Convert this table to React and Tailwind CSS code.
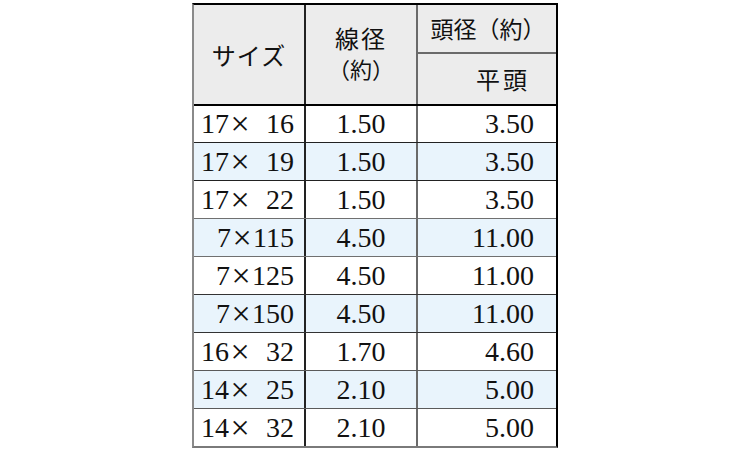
import React from "react";

const rows = [
  { a: "17", b: "16", d: "1.50", h: "3.50", line: "border-t-[#222]" },
  { a: "17", b: "19", d: "1.50", h: "3.50", line: "border-t-[#222]" },
  { a: "17", b: "22", d: "1.50", h: "3.50", line: "border-t-[#222]" },
  { a: "7", b: "115", d: "4.50", h: "11.00", line: "border-t-[#707070]" },
  { a: "7", b: "125", d: "4.50", h: "11.00", line: "border-t-[#707070]" },
  { a: "7", b: "150", d: "4.50", h: "11.00", line: "border-t-[#333]" },
  { a: "16", b: "32", d: "1.70", h: "4.60", line: "border-t-[#333]" },
  { a: "14", b: "25", d: "2.10", h: "5.00", line: "border-t-[#5a5a5a]" },
  { a: "14", b: "32", d: "2.10", h: "5.00", line: "border-t-[#5a5a5a]" },
];

const font = { fontFamily: '"Liberation Serif", "Noto Sans CJK JP", serif' };

function Size({ a, b }) {
  return (
    <span className="flex items-center justify-end">
      <span className="inline-block">{a.length === 1 ? <span className="inline-block w-[14px]" /> : null}{a}</span>
      <span className="inline-block w-[22px] text-center text-[34px] leading-none">×</span>
      {b.length === 2 ? <span className="inline-block w-[15px]" /> : null}
      <span>{b}</span>
    </span>
  );
}

export default function App() {
  return (
    <div className="w-[750px] h-[450px] bg-white" style={font}>
      <div className="mx-auto mt-[3px] w-[366px] border-t-2 border-t-black border-l-2 border-l-[#8a8a8a] border-r-2 border-r-black border-b-2 border-b-[#7a7a7a] text-[#111]">
        {/* header */}
        <div className="flex h-[101px] bg-[#ececec] border-b-2 border-b-black">
          <div className="w-[112px] border-r-2 border-r-[#222] flex items-center justify-center">
            <span className="text-[24px] tracking-[1px] leading-none" style={{ fontFamily: '"Noto Sans CJK JP", serif' }}>サイズ</span>
          </div>
          <div className="w-[112px] border-r-2 border-r-[#6a6a6a] flex flex-col items-center justify-center pb-[4px]">
            <span className="text-[24px] leading-[30px] tracking-[2px]" style={{ fontFamily: '"Noto Sans CJK JP", serif' }}>線径</span>
            <span className="text-[22px] leading-[30px]" style={{ fontFamily: '"Noto Sans CJK JP", serif' }}>（約）</span>
          </div>
          <div className="flex-1 flex flex-col">
            <div className="h-[49px] border-b-2 border-b-[#6a6a6a] flex items-center justify-center pl-[2px]">
              <span className="text-[23px] leading-none" style={{ fontFamily: '"Noto Sans CJK JP", serif' }}>頭径（約）</span>
            </div>
            <div className="flex-1 flex items-center justify-end pr-[26px]">
              <span className="text-[24px] leading-none tracking-[3px]" style={{ fontFamily: '"Noto Sans CJK JP", serif' }}>平頭</span>
            </div>
          </div>
        </div>
        {/* body */}
        {rows.map((r, i) => (
          <div
            key={i}
            className={
              "flex text-[28px] leading-none " +
              (i % 2 === 1 ? "bg-[#e9f4fc] " : "bg-white ") +
              (i === 0 ? "h-[36px]" : "h-[38px] border-t " + r.line)
            }
          >
            <div className="w-[112px] border-r-2 border-r-[#222] flex items-center justify-end pr-[10px]">
              <Size a={r.a} b={r.b} />
            </div>
            <div className="w-[112px] border-r-2 border-r-[#6a6a6a] flex items-center justify-center">
              {r.d}
            </div>
            <div className="flex-1 flex items-center justify-end pr-[22px]">{r.h}</div>
          </div>
        ))}
      </div>
    </div>
  );
}
